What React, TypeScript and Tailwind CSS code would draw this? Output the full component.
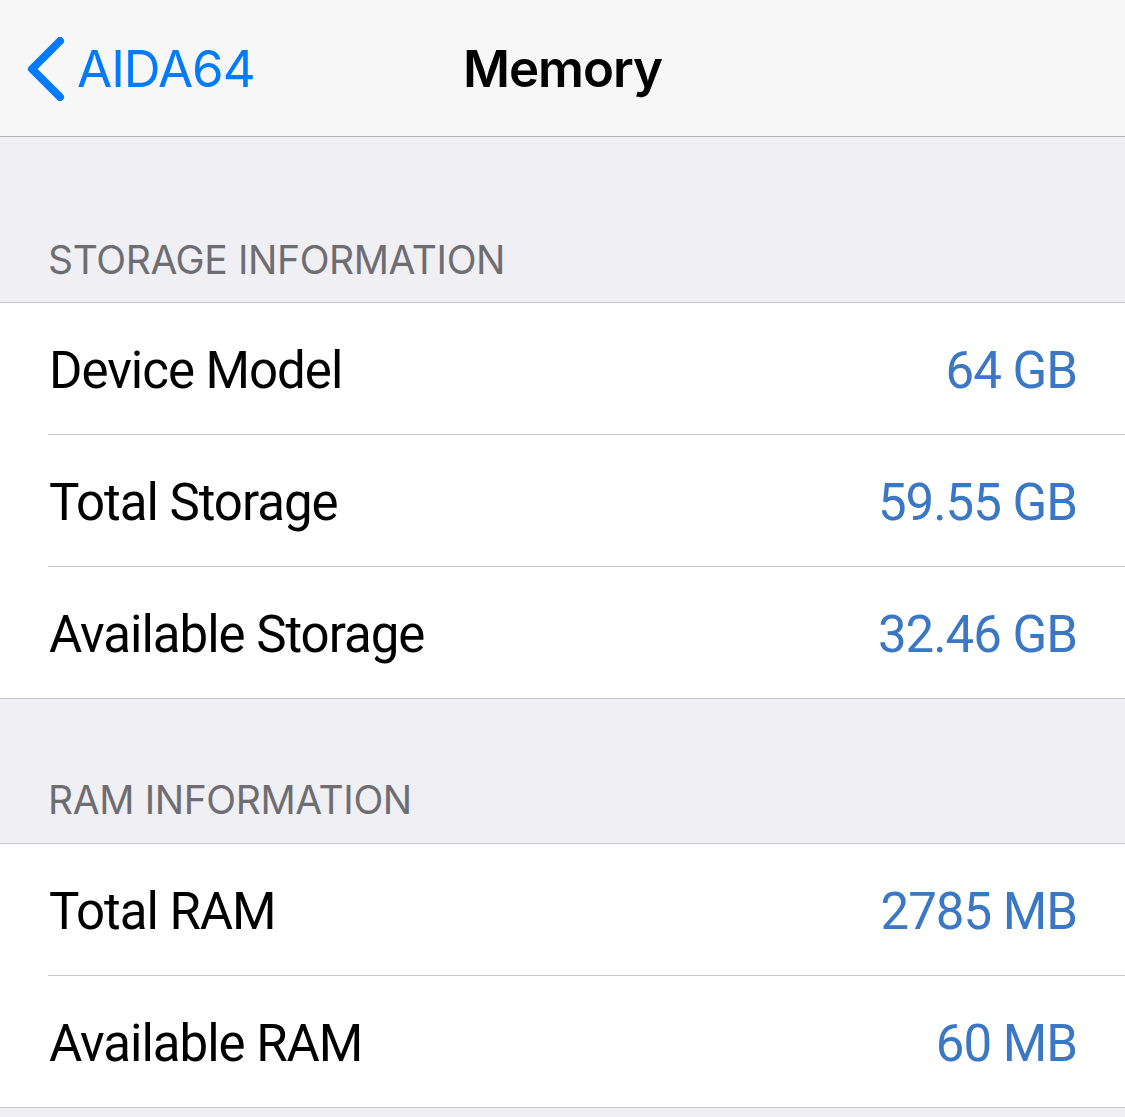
import React from "react";

const inter = { fontFamily: "Inter, 'Noto Sans', sans-serif" };
const roboto = { fontFamily: "Roboto, 'Noto Sans', sans-serif" };

function Row({ label, value, last }: { label: string; value: string; last?: boolean }) {
  return (
    <div className="bg-white">
      <div
        className="h-[131px] flex items-center justify-between pl-[49px] pr-[48px] pt-[3px]"
        style={roboto}
      >
        <span className="text-[51px] leading-none text-black tracking-[-0.02em]">{label}</span>
        <span className="text-[51px] leading-none text-[#3a77c4] tracking-[-0.02em]">{value}</span>
      </div>
      {last ? (
        <div className="h-px bg-[#c8c7cc]" />
      ) : (
        <div className="h-px bg-[#c8c7cc] ml-[48px]" />
      )}
    </div>
  );
}

export default function App() {
  return (
    <div className="w-[1125px] h-[1117px] bg-[#efeff4] overflow-hidden" style={inter}>
      <div className="h-[137px] bg-[#f7f7f7] border-b border-[#b2b2b2] relative flex items-center">
        <div className="flex items-center pl-[27px]">
          <svg width="38" height="64" viewBox="0 0 38 64" className="mr-[12px] mt-[2px]">
            <path d="M33 4 L5 32 L33 60" fill="none" stroke="#007aff" strokeWidth="8" strokeLinecap="round" strokeLinejoin="round" />
          </svg>
          <span className="text-[51px] leading-none text-[#007aff] tracking-[-0.02em]">AIDA64</span>
        </div>
        <div className="absolute inset-0 flex items-center justify-center">
          <span className="text-[51px] leading-none font-semibold text-black tracking-[-0.02em]">Memory</span>
        </div>
      </div>
      <div className="bg-[#efeff4] pt-[103px] pb-[23px] border-b border-[#c8c7cc]">
        <div className="pl-[48px] text-[39px] leading-none text-[#6d6d72] tracking-[-0.01em]">STORAGE INFORMATION</div>
      </div>
      <Row label="Device Model" value="64 GB" />
      <Row label="Total Storage" value="59.55 GB" />
      <Row label="Available Storage" value="32.46 GB" last />
      <div className="bg-[#efeff4] pt-[81px] pb-[24px] border-b border-[#c8c7cc]">
        <div className="pl-[48px] text-[39px] leading-none text-[#6d6d72] tracking-[-0.01em]">RAM INFORMATION</div>
      </div>
      <Row label="Total RAM" value="2785 MB" />
      <Row label="Available RAM" value="60 MB" last />
    </div>
  );
}
